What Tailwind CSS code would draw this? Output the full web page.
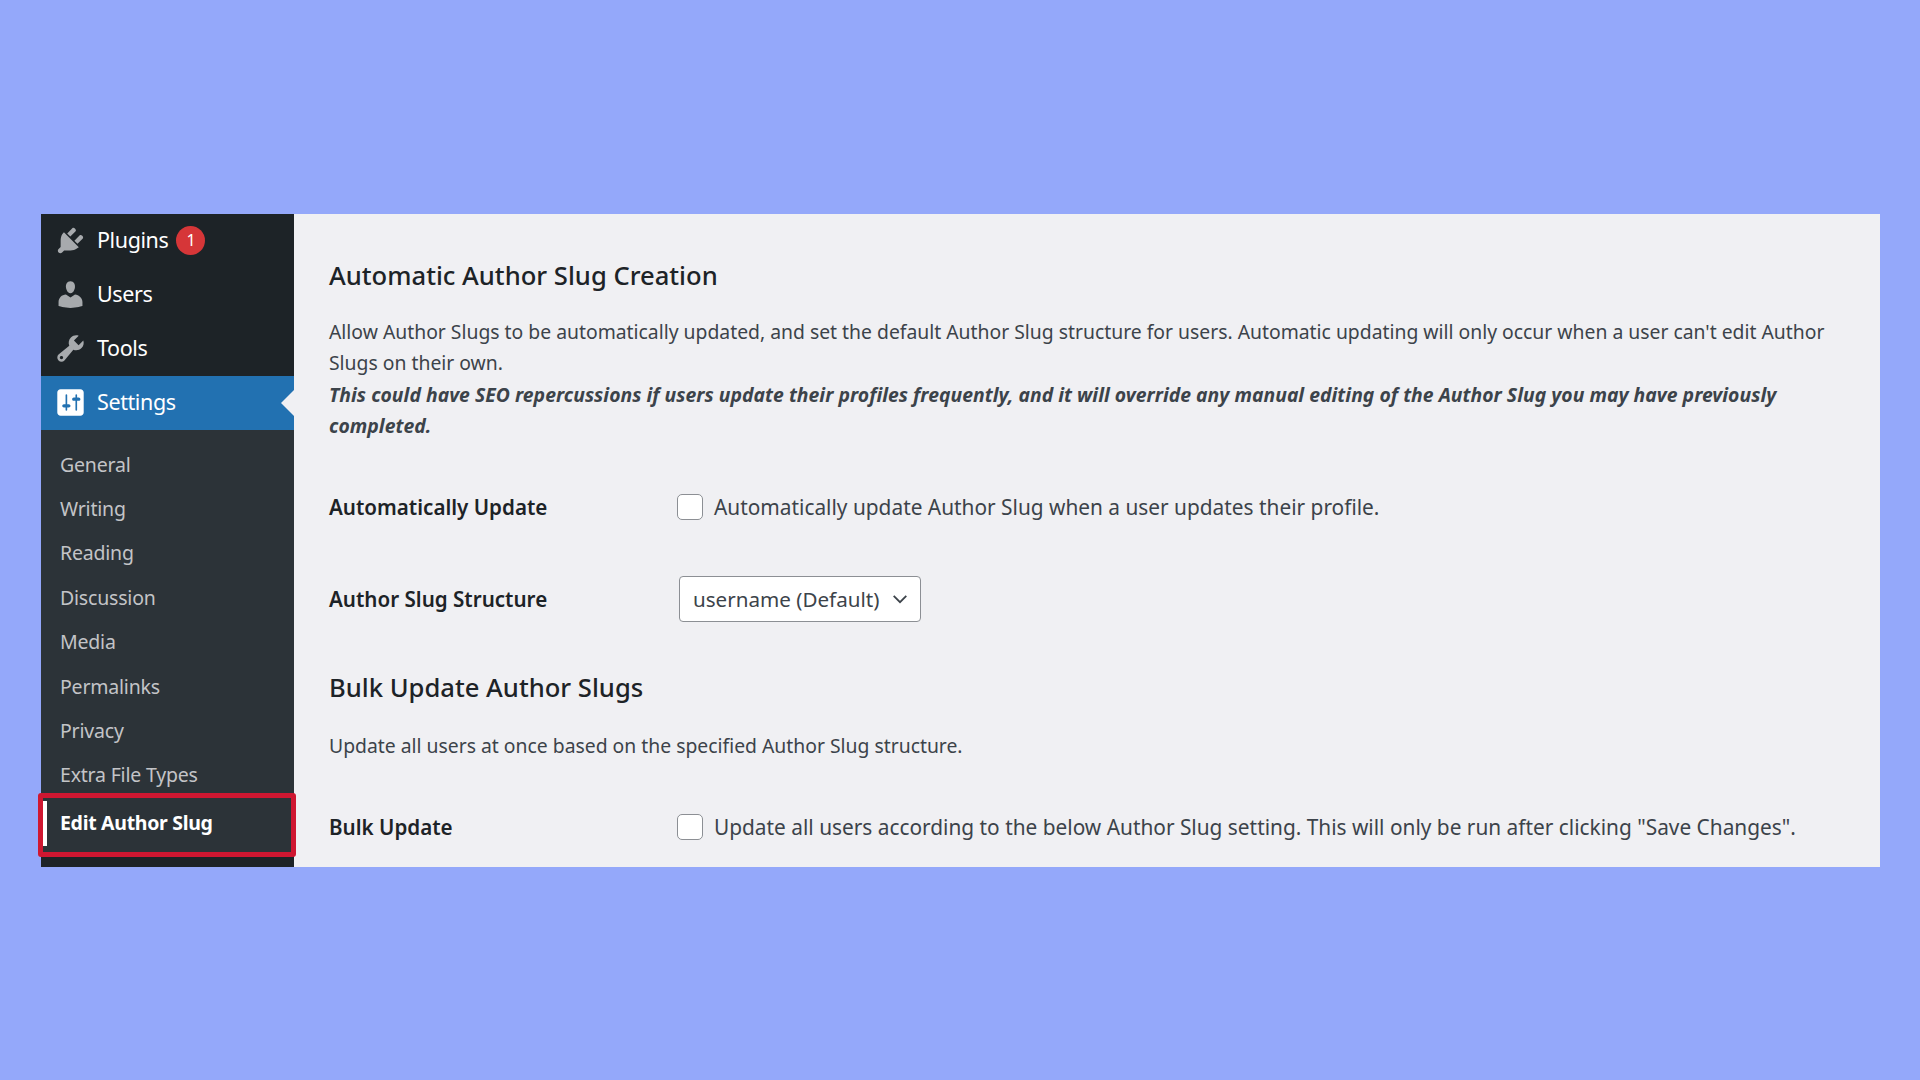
<!DOCTYPE html>
<html lang="en">
  <head>
    <meta charset="UTF-8" />
    <title>Edit Author Slug</title>
    <script src="https://cdn.jsdelivr.net/npm/@tailwindcss/browser@4"></script>
  </head>
  <body class="bg-[#94a8fa] h-[1080px] overflow-hidden font-['Noto_Sans',sans-serif] pt-[214px] pl-[41px]">
    <div class="relative flex w-[1839px] h-[653px] bg-[#f0f0f3]">
      <!-- sidebar -->
      <aside class="w-[253px] shrink-0 bg-[#1d2327] flex flex-col">
        <a class="flex items-center h-[54px] pb-[2px] pl-[13px] text-white text-[21.5px] tracking-[-0.4px]">
          <svg class="w-[33px] h-[33px] mr-[10px] fill-[#a7aaad]" viewBox="0 0 20 20"><path d="M13.11 4.36L9.87 7.6 8 5.73l3.24-3.24c.35-.34 1.05-.2 1.56.32.52.51.66 1.21.31 1.55zm-8 1.77l.91-1.12 9.01 9.01-1.19.84c-.71.71-2.63 1.16-3.82 1.16H6.14L4.9 17.26c-.59.59-1.54.59-2.12 0-.59-.58-.59-1.53 0-2.12l1.24-1.24v-3.88c0-1.13.4-3.19 1.09-3.89zm7.26 3.97l3.24-3.24c.34-.35 1.04-.21 1.55.31.52.51.66 1.21.31 1.55l-3.24 3.25z"/></svg>
          Plugins
          <span class="ml-[8px] w-[29px] h-[29px] rounded-full bg-[#d63638] flex items-center justify-center text-[16px]">1</span>
        </a>
        <a class="flex items-center h-[54px] pb-[2px] pl-[13px] text-white text-[21.5px] tracking-[-0.4px]">
          <svg class="w-[33px] h-[33px] mr-[10px] fill-[#a7aaad]" viewBox="0 0 20 20"><path d="M10 9.25c-2.27 0-2.73-3.44-2.73-3.44C7 4.02 7.82 2 9.97 2c2.16 0 2.98 2.02 2.71 3.81 0 0-.41 3.44-2.68 3.44zm0 2.57L12.72 10c2.39 0 4.52 2.33 4.52 4.53v2.49s-3.65 1.13-7.24 1.13c-3.65 0-7.24-1.13-7.24-1.13v-2.49c0-2.25 1.94-4.48 4.47-4.48z"/></svg>
          Users
        </a>
        <a class="flex items-center h-[54px] pb-[2px] pl-[13px] text-white text-[21.5px] tracking-[-0.4px]">
          <svg class="w-[33px] h-[33px] mr-[10px] fill-[#a7aaad]" viewBox="0 0 20 20"><path d="M16.68 9.77c-1.34 1.34-3.3 1.67-4.95.99l-5.41 6.52c-.99.99-2.59.99-3.58 0s-.99-2.59 0-3.57l6.52-5.42c-.68-1.65-.35-3.61.99-4.95 1.28-1.28 3.12-1.62 4.72-1.06l-2.89 2.89 2.82 2.82 2.86-2.87c.53 1.58.18 3.39-1.08 4.65zM3.81 16.21c.4.39 1.04.39 1.43 0 .4-.4.4-1.04 0-1.43-.39-.4-1.03-.4-1.43 0-.39.39-.39 1.03 0 1.43z"/></svg>
          Tools
        </a>
        <a class="relative flex items-center h-[54px] pb-[2px] pl-[13px] bg-[#2271b1] text-white text-[21.5px] tracking-[-0.4px]">
          <svg class="w-[33px] h-[33px] mr-[10px] fill-white" viewBox="0 0 20 20"><path fill-rule="evenodd" d="M18 16V4c0-1.1-.9-2-2-2H4c-1.1 0-2 .9-2 2v12c0 1.1.9 2 2 2h12c1.1 0 2-.9 2-2zM8 11h1c.55 0 1 .45 1 1s-.45 1-1 1H8v1.5c0 .28-.22.5-.5.5s-.5-.22-.5-.5V13H6c-.55 0-1-.45-1-1s.45-1 1-1h1V5.5c0-.28.22-.5.5-.5s.5.22.5.5V11zm5-2h-1c-.55 0-1-.45-1-1s.45-1 1-1h1V5.5c0-.28.22-.5.5-.5s.5.22.5.5V7h1c.55 0 1 .45 1 1s-.45 1-1 1h-1v5.5c0 .28-.22.5-.5.5s-.5-.22-.5-.5V9z"/></svg>
          Settings
          <span class="absolute right-0 top-[14px] border-y-[13px] border-r-[13px] border-y-transparent border-r-[#f0f0f3]"></span>
        </a>
        <div class="flex-1 bg-[#2c3338] pt-[12px] text-[#c3c4c7] text-[19.5px] tracking-[-0.2px]">
          <a class="flex items-center h-[44.4px] pl-[19px]">General</a>
          <a class="flex items-center h-[44.4px] pl-[19px]">Writing</a>
          <a class="flex items-center h-[44.4px] pl-[19px]">Reading</a>
          <a class="flex items-center h-[44.4px] pl-[19px]">Discussion</a>
          <a class="flex items-center h-[44.4px] pl-[19px]">Media</a>
          <a class="flex items-center h-[44.4px] pl-[19px]">Permalinks</a>
          <a class="flex items-center h-[44.4px] pl-[19px]">Privacy</a>
          <a class="flex items-center h-[44.4px] pl-[19px]">Extra File Types</a>
          <a class="flex items-center h-[45px] mt-[4px] pb-[2px] pl-[13px] ml-[2px] border-l-[4px] border-white text-white font-bold tracking-[-0.3px]">Edit Author Slug</a>
        </div>
        <div class="h-[10px] bg-[#1d2327]"></div>
      </aside>
      <!-- red highlight over the active submenu item -->
      <div class="absolute left-[-3px] top-[579px] w-[258px] h-[64px] border-[5px] border-[#cf1731] rounded-[3px]"></div>

      <!-- main -->
      <main class="flex-1 pl-[35px] pr-[40px] pt-[44px] text-[#3c434a]">
        <h2 class="text-[25.6px] leading-[36px] font-medium text-[#1d2327]">Automatic Author Slug Creation</h2>
        <p class="mt-[22px] text-[19.35px] leading-[31.3px]">
          Allow Author Slugs to be automatically updated, and set the default Author Slug structure for users. Automatic updating will only occur when a user can't edit Author Slugs on their own.<br />
          <b class="italic tracking-[0.03px]">This could have SEO repercussions if users update their profiles frequently, and it will override any manual editing of the Author Slug you may have previously completed.</b>
        </p>
        <div class="mt-[51px] flex items-center h-[30px]">
          <div class="w-[348px] text-[20.6px] font-semibold text-[#1d2327]">Automatically Update</div>
          <span class="w-[26px] h-[26px] bg-white border border-[#8c8f94] rounded-[5px] mr-[11px]"></span>
          <span class="text-[20.85px]">Automatically update Author Slug when a user updates their profile.</span>
        </div>
        <div class="mt-[54px] flex items-center h-[46px]">
          <div class="w-[350px] text-[20.6px] font-semibold text-[#1d2327]">Author Slug Structure</div>
          <div class="w-[242px] h-[46px] bg-white border border-[#8c8f94] rounded-[4px] flex items-center justify-between pl-[13px] pr-[11px] text-[20.6px]">
            username (Default)
            <svg class="w-[18px] h-[18px] fill-none stroke-[#3c434a] stroke-[2px]" viewBox="0 0 20 20"><path d="M3 6.5l7 7 7-7"/></svg>
          </div>
        </div>
        <h2 class="mt-[48px] text-[25.6px] leading-[36px] font-medium text-[#1d2327]">Bulk Update Author Slugs</h2>
        <p class="mt-[24px] text-[19.35px] leading-[31px]">Update all users at once based on the specified Author Slug structure.</p>
        <div class="mt-[51px] flex items-center h-[30px]">
          <div class="w-[348px] text-[20.6px] font-semibold text-[#1d2327]">Bulk Update</div>
          <span class="w-[26px] h-[26px] bg-white border border-[#8c8f94] rounded-[5px] mr-[11px]"></span>
          <span class="text-[20.85px]">Update all users according to the below Author Slug setting. This will only be run after clicking "Save Changes".</span>
        </div>
      </main>
    </div>
  </body>
</html>
